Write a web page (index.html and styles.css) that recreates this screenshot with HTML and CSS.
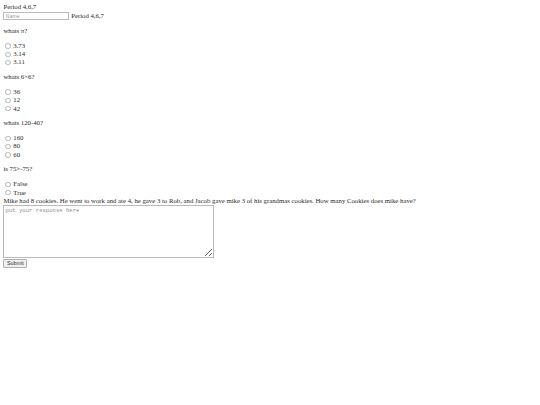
FILE: index.html
```html
<!DOCTYPE html>
<html>
<head>
<meta charset="utf-8">
<link rel="stylesheet" href="styles.css">
</head>
<body class="page">
<form class="quiz">
  <div class="line">Period 4,6,7</div>
  <div class="name-row">
    <input class="name" type="text" placeholder="Name">
    <span>Period 4,6,7</span>
  </div>
  <p class="question">whats π?</p>
  <label class="option"><input class="choice" type="radio" name="q1"><span>3.73</span></label>
  <label class="option"><input class="choice" type="radio" name="q1"><span>3.14</span></label>
  <label class="option"><input class="choice" type="radio" name="q1"><span>3.11</span></label>
  <p class="question">whats 6×6?</p>
  <label class="option"><input class="choice" type="radio" name="q2"><span>36</span></label>
  <label class="option"><input class="choice" type="radio" name="q2"><span>12</span></label>
  <label class="option"><input class="choice" type="radio" name="q2"><span>42</span></label>
  <p class="question">whats 120-40?</p>
  <label class="option"><input class="choice" type="radio" name="q3"><span>160</span></label>
  <label class="option"><input class="choice" type="radio" name="q3"><span>80</span></label>
  <label class="option"><input class="choice" type="radio" name="q3"><span>60</span></label>
  <p class="question">is 75&gt;-75?</p>
  <label class="option"><input class="choice" type="radio" name="q4"><span>False</span></label>
  <label class="option"><input class="choice" type="radio" name="q4"><span>True</span></label>
  <div class="line">Mike had 8 cookies. He went to work and ate 4, he gave 3 to Rob, and Jacob gave mike 3 of his grandmas cookies. How many Cookies does mike have?</div>
  <textarea class="answer" placeholder="put your response here"></textarea>
  <button class="submit" type="button">Submit</button>
</form>
</body>
</html>
```
FILE: styles.css
```css
.page {
  margin: 0;
  padding: 3.4px;
  font-family: "Liberation Serif", serif;
  font-size: 6.75px;
  color: #2a2a2a;
  background: #fff;
}
.quiz {
  display: flex;
  flex-direction: column;
  align-items: flex-start;
  margin: 0;
}
.line {
  line-height: 7.8px;
  white-space: nowrap;
}
.name-row {
  display: flex;
  align-items: center;
  gap: 1.8px;
  height: 8.8px;
  margin-top: 0.2px;
  line-height: 7.8px;
}
.question {
  margin: 6.75px 0;
  line-height: 7.8px;
}
.name {
  box-sizing: border-box;
  width: 66px;
  height: 8.4px;
  margin: 0;
  padding: 0 1.2px;
  border: 1px solid #bcbcbc;
  border-radius: 0;
  font-family: "Liberation Sans", sans-serif;
  font-size: 5.3px;
}
.name::placeholder {
  color: #999;
}
.option {
  display: flex;
  align-items: center;
  height: 8.3px;
  line-height: 7.8px;
}
.choice {
  appearance: none;
  box-sizing: border-box;
  width: 5.4px;
  height: 5.4px;
  margin: 0.6px 2.4px 0 2.1px;
  border: 0.6px solid #b4b4b4;
  border-radius: 50%;
  background: #fff;
}
.answer {
  box-sizing: border-box;
  width: 211px;
  height: 53px;
  margin: 0.2px 0 0;
  padding: 1.2px;
  border: 1px solid #bababa;
  border-radius: 0;
  font-family: "Liberation Mono", monospace;
  font-size: 5.6px;
  resize: both;
}
.answer::placeholder {
  color: #8c8c8c;
}
.submit {
  box-sizing: border-box;
  height: 9px;
  width: 24px;
  margin: 1.6px 0 0;
  padding: 0;
  border: 0.8px solid #b0b0b0;
  border-radius: 1px;
  background: #efefef;
  font-family: "Liberation Sans", sans-serif;
  font-size: 5.4px;
  color: #333;
  line-height: 1;
}
```
